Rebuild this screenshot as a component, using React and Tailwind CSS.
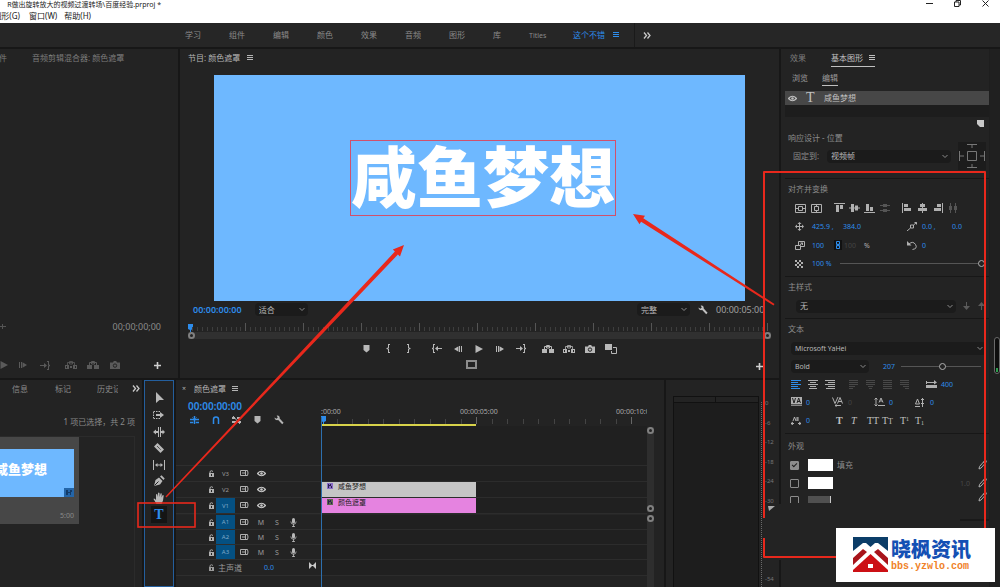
import { useState } from "react";

const workspaces = ["学习", "组件", "编辑", "颜色", "效果", "音频", "图形"];

const videoTracks = [
  { id: "V3", active: false },
  { id: "V2", active: false, clip: { name: "咸鱼梦想", color: "bg-[#c5c5c5]", fx: "bg-[#8a6cc4]" } },
  { id: "V1", active: true, clip: { name: "颜色遮罩", color: "bg-[#e583e0]", fx: "bg-[#5c6a4c]" } },
];
const audioTracks = ["A1", "A2", "A3"];

const dbLabels = ["0", "-6", "-12", "-18", "-24", "-30", "", "", "", "-54"];

// ---------- Icons ----------
function Svg({ w = 12, h = 12, className = "", children }) {
  return (
    <svg
      width={w}
      height={h}
      viewBox={`0 0 ${w} ${h}`}
      fill="currentColor"
      className={`shrink-0 ${className}`}
      aria-hidden="true"
    >
      {children}
    </svg>
  );
}

const MenuIcon = () => (
  <Svg w={6} h={6}>
    <path d="M0 0h6v1H0zM0 2h6v1H0zM0 4h6v1H0z" />
  </Svg>
);

const Chevron = () => (
  <Svg w={6} h={5}>
    <path d="M.5 1l2.500 2.500L5.500 1" fill="none" stroke="currentColor" />
  </Svg>
);

const More = () => (
  <Svg w={8} h={7}>
    <path d="M1 .5l2.500 3L1 6.500M4.500 .5L7 3.500 4.500 6.500" fill="none" stroke="currentColor" strokeWidth="1.300" />
  </Svg>
);

const Plus = () => (
  <Svg w={7} h={7}>
    <path d="M2.700 0h1.600v2.700H7v1.600H4.300V7H2.700V4.300H0V2.700h2.700z" />
  </Svg>
);

const Wrench = () => (
  <Svg w={10} h={10}>
    <path d="M.6 2.400L2.400 3.800 3.800 2.600 2.700.7C4.500.2 6 1.500 5.700 3.400L9.600 7.800 8.200 9.300 4.200 5.100C2.300 5.700.3 4.300.6 2.400z" />
  </Svg>
);

const Eye = () => (
  <Svg w={9} h={7}>
    <path d="M.5 3.500Q4.500-1 8.500 3.500 4.500 8 .5 3.500z" fill="none" stroke="currentColor" strokeWidth="1.200" />
    <circle cx="4.500" cy="3.500" r="1.300" />
  </Svg>
);

const Lock = () => (
  <Svg w={7} h={7}>
    <path d="M1 3h5v4H1z" />
    <path d="M2 3V1.500Q3.500 0 5 1.500" fill="none" stroke="currentColor" />
    <path d="M3 4h1v2H3z" fill="#232323" />
  </Svg>
);

const SyncLock = () => (
  <Svg w={9} h={7}>
    <path d="M.5.5h5v5h-5zM5 .5h2.500q1 2.500 0 5H5M2 3h4" fill="none" stroke="currentColor" />
  </Svg>
);

const Mic = () => (
  <Svg w={7} h={9}>
    <rect x="2" y="0" width="3" height="5.500" rx="1.500" />
    <path d="M.8 3.500Q1 6.300 3.500 6.300T6.200 3.500M3.500 6v3M2 8.500h3" fill="none" stroke="currentColor" strokeWidth=".8" />
  </Svg>
);

const Marker = () => (
  <Svg w={7} h={8}>
    <path d="M.5 0h6v5L3.500 7.500.5 5z" />
  </Svg>
);

const Brace = ({ flip }) => (
  <Svg w={4} h={9} className={flip ? "rotate-180" : ""}>
    <path d="M2 0h2v1H3v3L2 4.500 3 5v3h1v1H2V5.500L.5 5V4L2 3.500z" />
  </Svg>
);

const GoIn = ({ flip }) => (
  <Svg w={10} h={9} className={flip ? "rotate-180" : ""}>
    <path d="M1 0h2v1H2v3l-.5.500L2 5v3h1v1H1V5.500L0 5V4l1-.5z" />
    <path d="M3 4.500L6 2v2h4v1H6v2z" />
  </Svg>
);

const Step = ({ flip }) => (
  <Svg w={8} h={8} className={flip ? "rotate-180" : ""}>
    <path d="M0 1h1v6H0zM2 1h1v6H2zM3.500 1.200L8 4 3.500 6.800z" />
  </Svg>
);

const Play = () => (
  <Svg w={8} h={8}>
    <path d="M.5 0L8 4 .5 8z" />
  </Svg>
);

const Lift = () => (
  <Svg w={12} h={8}>
    <path d="M0 4h5v4H0zM7 4h5v4H7z" />
    <path d="M2.500 4V1.500h7V4M4.500 .5h3v2.500h-3z" fill="none" stroke="currentColor" />
  </Svg>
);

const Extract = () => (
  <Svg w={12} h={8}>
    <path d="M0 4h4v4H0zM8 4h4v4H8zM5 5h2v2H5z" />
    <path d="M2.500 4V1.500h7V4M4.500 .5h3v2.500h-3z" fill="none" stroke="currentColor" strokeWidth=".8" />
    <path d="M1 5h1v2H1zM10 5h1v2h-1z" fill="#232323" />
  </Svg>
);

const Camera = () => (
  <Svg w={10} h={8}>
    <path d="M0 1.500h3L3.800 0h2.400L7 1.500h3V8H0z" />
    <circle cx="5" cy="4.600" r="1.700" fill="none" stroke="#232323" />
  </Svg>
);

const Compare = () => (
  <Svg w={12} h={10}>
    <path d="M0 0h7v6H0z" />
    <path d="M8 3.500h3.500v6h-5V7" fill="none" stroke="currentColor" />
  </Svg>
);

const Pipette = () => (
  <Svg w={9} h={10}>
    <path d="M1 9l.5-2.500 4-4.500 1.500 1.500-4 4.500z" fill="none" stroke="currentColor" />
    <path d="M5 1.800L6.700.3q1-.6 1.700.2t0 1.700L7.500 4z" />
  </Svg>
);

// left / centre / right / justified paragraph marks
const Lines = ({ rows }) => (
  <Svg w={10} h={9}>
    {rows.map(([x, w], i) => (
      <rect key={i} x={x} y={i * 2} width={w} height="1" />
    ))}
  </Svg>
);

const Playhead = () => (
  <Svg w={6} h={8} className="text-[#2d8ceb]">
    <path d="M0 0h5v5l-2 1v2H2V6L0 5z" />
  </Svg>
);

// ---------- Controls ----------
function Select({ label, value, className = "", selectClass = "" }) {
  return (
    <label className={`relative flex h-[13px] items-center rounded-sm bg-[#1b1b1b] ${className}`}>
      <select
        aria-label={label}
        className={`h-full w-full appearance-none bg-transparent pl-1 leading-none text-[#b8b8b8] outline-none ${selectClass}`}
      >
        <option>{value}</option>
      </select>
      <span className="pointer-events-none absolute right-[3px] text-[#8a8a8a]">
        <Chevron />
      </span>
    </label>
  );
}

function Slider({ label, defaultValue, className = "" }) {
  return (
    <input
      type="range"
      aria-label={label}
      defaultValue={defaultValue}
      className={`h-2 min-w-0 appearance-none bg-transparent [&::-webkit-slider-runnable-track]:h-px [&::-webkit-slider-runnable-track]:bg-[#555] [&::-webkit-slider-thumb]:-mt-[3px] [&::-webkit-slider-thumb]:size-[7px] [&::-webkit-slider-thumb]:appearance-none [&::-webkit-slider-thumb]:rounded-full [&::-webkit-slider-thumb]:border [&::-webkit-slider-thumb]:border-[#b0b0b0] [&::-webkit-slider-thumb]:bg-[#232323] ${className}`}
    />
  );
}

function Check({ label, checked }) {
  return (
    <input
      type="checkbox"
      aria-label={label}
      defaultChecked={checked}
      className="relative size-[9px] shrink-0 appearance-none rounded-[1px] border border-[#8c8c8c] checked:bg-[#8c8c8c] checked:after:absolute checked:after:top-0 checked:after:left-[2px] checked:after:h-[5px] checked:after:w-[3px] checked:after:rotate-45 checked:after:border-r checked:after:border-b checked:after:border-[#1e1e1e]"
    />
  );
}

const Ring = () => (
  <span className="block size-[7px] shrink-0 rounded-full border-2 border-[#808080] bg-[#232323]" />
);

const Value = ({ children, className = "" }) => (
  <span className={`text-[7px] text-[#2d8ceb] ${className}`}>{children}</span>
);

function IconButton({ label, className = "", children }) {
  return (
    <button aria-label={label} className={`flex shrink-0 items-center justify-center ${className}`}>
      {children}
    </button>
  );
}

// ---------- Title bar and workspaces ----------
function TitleBar() {
  return (
    <header className="flex h-[23px] justify-between overflow-hidden bg-white text-[8px] text-[#222]">
      <div>
        <div className="flex h-[9px] w-[161px] items-center justify-end text-[7px] whitespace-nowrap">
          R做出旋转放大的视频过渡转场\百度经验.prproj *
        </div>
        <nav className="flex h-[14px] items-center whitespace-nowrap">
          <button className="flex w-5 justify-end">图形(G)</button>
          <button className="ml-[9px]">窗口(W)</button>
          <button className="ml-[7px]">帮助(H)</button>
        </nav>
      </div>
      <div className="flex h-[7px] items-center gap-[21px] pr-[11px]">
        <IconButton label="最小化">
          <Svg w={7} h={7}><path d="M0 3h7v1H0z" /></Svg>
        </IconButton>
        <IconButton label="还原">
          <Svg w={7} h={7}>
            <path d="M.5 2h4.500v4.500H.5zM2 2V.5h4.500V5H5" fill="none" stroke="currentColor" />
          </Svg>
        </IconButton>
        <IconButton label="关闭">
          <Svg w={7} h={7}><path d="M.5.5l6 6M6.500.5l-6 6" fill="none" stroke="currentColor" /></Svg>
        </IconButton>
      </div>
    </header>
  );
}

function WorkspaceBar() {
  return (
    <nav className="flex h-[24px] items-center bg-[#262626] pl-[185px] text-[#8a8a8a]">
      {workspaces.map((name) => (
        <button key={name} className="w-11 text-left">{name}</button>
      ))}
      <button className="w-9 text-left">库</button>
      <button className="w-11 text-left text-[7px]">Titles</button>
      <button className="flex items-center gap-2 text-[#2d8ceb]">
        这个不错 <MenuIcon />
      </button>
      <span className="ml-[15px] h-full border-l border-[#1a1a1a]" />
      <IconButton label="更多" className="ml-2 text-[#c8c8c8]"><More /></IconButton>
    </nav>
  );
}

// ---------- Source monitor ----------
function SourcePanel() {
  return (
    <section className="flex w-[178px] shrink-0 flex-col overflow-hidden bg-[#232323] text-[#7c7c7c]">
      <div className="flex h-[18px] items-center whitespace-nowrap">
        <button className="flex w-[7px] justify-end">件</button>
        <button className="ml-[25px]">音频剪辑混合器: 颜色遮罩</button>
      </div>
      <div className="flex-1" />
      <div className="flex h-[18px] items-center justify-between pr-[17px] text-[#8a8a8a]">
        <Svg w={6} h={7}><path d="M0 3h6v1H0zM2 1h1v5H2z" fill="#555" /></Svg>
        <span className="text-[9px]">00;00;00;00</span>
      </div>
      <div className="mt-[21px] mb-[4px] flex h-[18px] items-center text-[#5a5a5a]">
        <IconButton label="播放" className="w-2"><Play /></IconButton>
        <IconButton label="前进" className="ml-1 w-[22px]"><Step /></IconButton>
        <IconButton label="转到出点" className="w-[22px]"><GoIn flip /></IconButton>
        <IconButton label="插入" className="ml-1 w-[22px]"><Extract /></IconButton>
        <IconButton label="覆盖" className="w-[22px]"><Lift /></IconButton>
        <IconButton label="导出帧" className="w-[22px]"><Camera /></IconButton>
        <IconButton label="按钮编辑器" className="mr-[17px] ml-auto text-[#d0d0d0]"><Plus /></IconButton>
      </div>
    </section>
  );
}

// ---------- Program monitor ----------
function MonitorRuler() {
  return (
    <div className="mr-[8px] ml-[8px]">
      <div className="flex h-[10px] items-end">
        <Playhead />
        <svg className="-ml-[6px] h-[9px] w-full" aria-hidden="true">
          <defs>
            <pattern id="ticks" width="58" height="9" x="-1" patternUnits="userSpaceOnUse">
              <path d="M.5 0v8" stroke="#555" />
              <path
                d="M5.500 4v4M10.500 4v4M15.500 4v4M20.500 4v4M25.500 4v4M30.500 4v4M34.500 4v4M39.500 4v4M44.500 4v4M49.500 4v4M53.500 4v4"
                stroke="#3e3e3e"
              />
            </pattern>
          </defs>
          <rect width="100%" height="9" fill="url(#ticks)" />
        </svg>
      </div>
      <div className="flex h-[7px] items-center justify-between bg-[#303030]">
        <Ring />
        <Ring />
      </div>
    </div>
  );
}

function ProgramPanel() {
  return (
    <section className="flex min-w-0 flex-1 flex-col bg-[#232323]">
      <div className="flex h-[18px] items-center gap-[7px] pl-2 text-[#b4b4b4]">
        <h2>节目: 颜色遮罩</h2>
        <MenuIcon />
      </div>
      <div className="relative mx-[34px] mt-2 min-h-[226px] flex-1 bg-[#6eb8ff]">
        {/* title layer on the video canvas */}
        <div className="absolute top-[65px] left-[136px] flex h-[76px] items-center border border-[#d0506c] pb-1 text-[66px] leading-none font-black whitespace-nowrap text-white">
          咸鱼梦想
        </div>
      </div>
      <div className="flex h-[17px] items-center pl-[13px] whitespace-nowrap">
        <span className="text-[9px] font-semibold text-[#2d8ceb]">00:00:00:00</span>
        <Select label="缩放级别" value="适合" className="ml-[13px] w-[53px]" />
        <Select label="回放分辨率" value="完整" className="ml-auto w-[53px]" />
        <IconButton label="设置" className="ml-2 text-[#c0c0c0]"><Wrench /></IconButton>
        <span className="ml-[8px] w-[63px] text-[9px] text-[#a0a0a0]">00:00:05:00</span>
      </div>
      <div className="pt-1"><MonitorRuler /></div>
      <div className="flex h-[19px] items-center justify-center pl-[18px] text-[#b8b8b8]">
        <IconButton label="添加标记" className="w-[21px]"><Marker /></IconButton>
        <IconButton label="标记入点" className="w-[21px]"><Brace /></IconButton>
        <IconButton label="标记出点" className="w-[21px]"><Brace flip /></IconButton>
        <IconButton label="转到入点" className="ml-[7px] w-[21px]"><GoIn /></IconButton>
        <IconButton label="后退一帧" className="w-[21px]"><Step flip /></IconButton>
        <IconButton label="播放" className="w-[21px]"><Play /></IconButton>
        <IconButton label="前进一帧" className="w-[21px]"><Step /></IconButton>
        <IconButton label="转到出点" className="w-[21px]"><GoIn flip /></IconButton>
        <IconButton label="提升" className="ml-[6px] w-[21px]"><Lift /></IconButton>
        <IconButton label="提取" className="w-[21px]"><Extract /></IconButton>
        <IconButton label="导出帧" className="w-[21px]"><Camera /></IconButton>
        <IconButton label="比较视图" className="w-[21px]"><Compare /></IconButton>
      </div>
      <div className="grid h-[20px] grid-cols-[1fr_auto_1fr] pr-4 text-[#b8b8b8]">
        <span />
        <IconButton label="安全边距" className="h-3 text-[#8c8c8c]">
          <Svg w={11} h={9}><path d="M1 1h9v7H1z" fill="none" stroke="currentColor" strokeWidth="2" /></Svg>
        </IconButton>
        <IconButton label="按钮编辑器" className="h-4 justify-self-end text-[#d0d0d0]"><Plus /></IconButton>
      </div>
    </section>
  );
}

// ---------- Project bin ----------
function ProjectPanel() {
  return (
    <section className="flex w-[142px] shrink-0 flex-col overflow-hidden bg-[#232323] text-[#8a8a8a]">
      <div className="flex h-[17px] items-center pl-3 whitespace-nowrap">
        <button className="w-[43px] text-left">信息</button>
        <button className="w-[42px] text-left">标记</button>
        <button className="w-[21px] overflow-hidden text-left">历史记</button>
        <IconButton label="更多" className="ml-[14px] text-[#c8c8c8]"><More /></IconButton>
      </div>
      <p className="mt-[16px] flex h-[18px] items-center justify-end pr-[7px]">1 项已选择，共 2 项</p>
      <div className="mt-[5px] mr-[7px] flex-1 border-t border-r border-[#2b2b2b]">
        <figure className="h-[87px] w-[79px] bg-[#474747] pt-3">
          <div className="relative flex h-12 w-[74px] items-center justify-end overflow-hidden bg-[#6eb8ff] pr-[27px] pb-2 text-[13px] font-black whitespace-nowrap text-white">
            咸鱼梦想
            <span className="absolute right-0 bottom-0 flex h-[9px] w-[10px] items-center justify-center bg-[#2465a8] text-[#123a68]">
              <Svg w={8} h={7}><path d="M1 6V1h2v5zM3 3h2v1H3zM5 1h2v2H6v3H5z" /></Svg>
            </span>
          </div>
          <figcaption className="mt-[15px] w-[74px] text-right text-[7px] leading-none text-[#8a8a8a]">5:00</figcaption>
        </figure>
      </div>
    </section>
  );
}

// ---------- Toolbar ----------
const tools = [
  {
    name: "选择工具",
    icon: <path d="M3 0l8 8H6.500L3 11z" />,
  },
  {
    name: "向前选择轨道工具",
    icon: (
      <>
        <path d="M.5 2.500h7M.5 9.500h7M.5 3v6" fill="none" stroke="currentColor" strokeDasharray="1.500 1" />
        <path d="M3 5h4V3l4 3-4 3V7H3z" />
      </>
    ),
  },
  {
    name: "波纹编辑工具",
    icon: <path d="M5 1h1v10H5zM7 1h1v10H7zM0 6l3-2.500V5h2v2H3v1.500zM12 6L9.500 3.500V5H8v2h1.500v1.500z" />,
  },
  {
    name: "剃刀工具",
    icon: (
      <>
        <path d="M1 4.500L4.500 1 11 7.500 7.500 11z" />
        <path d="M4 4l4 4" stroke="#232323" strokeDasharray="1 .7" />
      </>
    ),
  },
  {
    name: "外滑工具",
    icon: <path d="M0 1h1v10H0zM11 1h1v10h-1zM2 6l2.500-2v1.500h3V4L10 6 7.500 8V6.500h-3V8z" />,
  },
  {
    name: "钢笔工具",
    icon: (
      <>
        <path d="M1 11l1.500-6L6 2.500 9.500 6 7 9.500zM7 1.500L8.500.3l3.200 3.200L10.500 5z" />
        <path d="M1.500 10.500L5.500 6.500" stroke="#232323" />
      </>
    ),
  },
  {
    name: "手形工具",
    icon: <path d="M3.500 12L.5 7q.5-1 1.500 0l1 1V2.500q.8-1 1.300 0L4.800 5 5 1q.8-1 1.500 0l.2 4L7.500 1.500q.9-.7 1.300.2L8.500 5.500l1-2.200q.9-.6 1.200.4L10 8.500 8.500 12z" />,
  },
];

function ToolBar() {
  const [tool, setTool] = useState("文字工具");
  return (
    <section className="w-[30px] shrink-0 border border-[#245f9e] bg-[#232323] pt-[9px]">
      <div className="grid h-[133px] grid-rows-8 justify-items-center text-[#b8b8b8]">
        {tools.map((t) => (
          <button
            key={t.name}
            aria-label={t.name}
            onClick={() => setTool(t.name)}
            className="flex w-4 items-center justify-center"
          >
            <Svg>{t.icon}</Svg>
          </button>
        ))}
        <button
          aria-label="文字工具"
          onClick={() => setTool("文字工具")}
          className={`flex w-4 items-center justify-center font-['Liberation_Serif',serif] text-[14px] font-bold ${
            tool === "文字工具" ? "bg-[#151515] text-[#2d8ceb]" : ""
          }`}
        >
          T
        </button>
      </div>
    </section>
  );
}

// ---------- Timeline ----------
function TimeRuler() {
  return (
    <div className="flex min-w-0 flex-1 flex-col overflow-hidden pt-[9px]">
      <div className="flex h-[10px] items-center overflow-hidden text-[7px] whitespace-nowrap text-[#a8a8a8]">
        <span className="w-[139px] shrink-0">:00:00</span>
        <span className="w-[156px] shrink-0">00:00:05:00</span>
        <span>00:00:10:00</span>
      </div>
      <div className="flex h-[8px]">
        <Playhead />
        <svg className="-ml-[6px] h-2 w-full" aria-hidden="true">
          {Array.from({ length: 60 }, (_, i) => (
            <path key={i} d={`M${Math.round(i * 15.5)}.5 ${i % 10 ? 3 : 1}V8`} stroke={i % 10 ? "#444" : "#666"} />
          ))}
        </svg>
      </div>
      <div className="h-[2px] w-[155px] bg-[#d8d24a]" />
    </div>
  );
}

function TrackHeader({ id, active, audio }) {
  return (
    <div className="flex w-[145px] shrink-0 items-center border-b border-[#2e2e2e] pl-[30px] text-[6px] text-[#9a9a9a]">
      <IconButton label={`锁定 ${id}`} className="w-[10px] text-[#b0b0b0]"><Lock /></IconButton>
      <button
        className={`flex h-full w-[19px] items-center justify-center ${active ? "bg-[#045082] text-[#7fa9c8]" : ""}`}
      >
        {id}
      </button>
      <IconButton label={`同步锁定 ${id}`} className="w-[18px] text-[#b0b0b0]"><SyncLock /></IconButton>
      {audio ? (
        <>
          <button className="w-4 text-center text-[7px]">M</button>
          <button className="w-4 text-center text-[7px]">S</button>
          <IconButton label={`画外音 ${id}`} className="w-[17px] text-[#b8b8b8]"><Mic /></IconButton>
        </>
      ) : (
        <IconButton label={`显示 ${id}`} className="w-4 text-[#c8c8c8]"><Eye /></IconButton>
      )}
    </div>
  );
}

function Lane({ clip }) {
  return (
    <div className="flex min-w-0 flex-1 border-b border-[#2c2c2c] bg-[#202020]">
      {clip && (
        <div className={`flex h-[15px] w-[155px] items-start pt-px pl-[6px] text-[7px] leading-[8px] text-[#222] ${clip.color}`}>
          <span className={`mr-[5px] flex size-[6px] items-center justify-center text-[#2a2250] ${clip.fx}`}>
            <Svg w={4} h={4}><path d="M0 0h1v4H0zM1 1h1v1H1zM2 0h1v2h1v2H3V2H2z" /></Svg>
          </span>
          {clip.name}
        </div>
      )}
    </div>
  );
}

function Timeline() {
  return (
    <section className="flex min-w-0 flex-1 flex-col bg-[#232323] text-[#b4b4b4]">
      <div className="flex h-[17px] items-center pl-[6px]">
        <button aria-label="关闭序列" className="w-3 text-left text-[7px]">×</button>
        <h2>颜色遮罩</h2>
        <IconButton label="面板菜单" className="ml-[6px]"><MenuIcon /></IconButton>
      </div>
      <div className="relative flex flex-1">
        <div className="flex min-w-0 flex-1 flex-col">
          <div className="flex h-[29px]">
            <div className="w-[145px] shrink-0">
              <div className="flex h-[17px] items-center pl-3 text-[10px] font-semibold text-[#2d8ceb]">00:00:00:00</div>
              <div className="flex h-[11px] items-center pl-[8px]">
                <IconButton label="插入为嵌套" className="w-[21px] text-[#2d8ceb]">
                  <Svg w={9} h={8}>
                    <path d="M0 3h4v1H0zM0 6h3v1H0zM4 0h1v8H4zM5 3h4v1H5zM6 6h3v1H6zM2 1l2 2M7 1L5 3" stroke="currentColor" strokeWidth=".5" />
                  </Svg>
                </IconButton>
                <IconButton label="对齐" className="w-[21px] text-[#2d8ceb]">
                  <Svg w={8} h={8}>
                    <path d="M1.500 8V3.500q0-2.500 2.500-2.500t2.500 2.500V8" fill="none" stroke="currentColor" strokeWidth="1.500" />
                  </Svg>
                </IconButton>
                <IconButton label="链接选择项" className="w-[21px]">
                  <Svg w={9} h={8}>
                    <path d="M0 1h3v2H0zM5 1h4v2H5zM0 5h4v2H0zM6 5h3v2H6z" />
                    <path d="M1 0l7 8" fill="none" stroke="currentColor" />
                  </Svg>
                </IconButton>
                <IconButton label="添加标记" className="w-[21px]"><Marker /></IconButton>
                <IconButton label="时间轴设置" className="w-[21px]"><Wrench /></IconButton>
              </div>
            </div>
            <TimeRuler />
          </div>
          <div className="flex h-10">
            <div className="w-[145px] border-b border-[#2e2e2e]" />
            <div className="flex-1 border-b border-[#2c2c2c] bg-[#202020]" />
          </div>
          {videoTracks.map((t) => (
            <div key={t.id} className="flex h-[16px]">
              <TrackHeader id={t.id} active={t.active} />
              <Lane clip={t.clip} />
            </div>
          ))}
          <div className="h-px bg-[#262626]" />
          {audioTracks.map((id) => (
            <div key={id} className="flex h-[15px]">
              <TrackHeader id={id} active audio />
              <Lane />
            </div>
          ))}
          <div className="flex h-4">
            <div className="flex w-[145px] shrink-0 items-center border-b border-[#2e2e2e] pl-[30px] text-[#9a9a9a]">
              <IconButton label="锁定 主声道" className="w-[10px]"><Lock /></IconButton>
              <span className="ml-[2px]">主声道</span>
              <Value className="ml-[22px]">0.0</Value>
              <Svg w={7} h={7} className="mr-[5px] mb-1 ml-auto text-[#c8c8c8]">
                <path d="M0 0l3 3h1l3-3v7L4 4H3L0 7z" />
              </Svg>
            </div>
            <Lane />
          </div>
          <div className="flex-1" />
        </div>
        <div className="w-[17px] shrink-0 pt-[30px]">
          <div className="flex h-[85px] w-[7px] flex-col justify-between bg-[#2e2e2e]">
            <Ring />
            <Ring />
          </div>
          <div className="mt-[3px] h-[72px] w-[7px] bg-[#2e2e2e]"><Ring /></div>
        </div>
        {/* current time line across the tracks */}
        <div className="absolute top-[20px] bottom-0 left-[145px] w-px bg-[#2d6fae]" />
      </div>
    </section>
  );
}

// ---------- Audio meters ----------
function Meters() {
  return (
    <section className="flex w-[113px] shrink-0 bg-[#232323] pt-4 pl-[7px]">
      <div className="flex w-[86px] flex-col border border-b-0 border-[#111] bg-[#1d1d1d]">
        <div className="flex h-[6px] border-b border-[#111] bg-[#232323]">
          <div className="w-1/2 border-r border-[#111]" />
        </div>
      </div>
      <div className="mt-[6px] w-[3px] border-r border-dotted border-[#6a6a6a]" />
      <div className="flex-1 overflow-hidden pl-[3px] text-[6px] text-[#777]">
        <div className="grid h-[195px] grid-rows-10 leading-none">
          {dbLabels.map((db, i) => (
            <span key={i} className="pt-1">{db}</span>
          ))}
        </div>
      </div>
    </section>
  );
}

// ---------- Essential graphics ----------
const Title = ({ children }) => <h3 className="flex h-5 items-center pl-[3px] text-[#8c8c8c]">{children}</h3>;

function Transform() {
  return (
    <div className="text-[#b0b0b0]">
      <div className="flex h-[18px] items-center pl-[10px]">
        <IconButton label="水平居中" className="w-4 justify-start">
          <Svg w={11} h={9}><path d="M.5.5h10v8H.5zM0 4.500h3M8 4.500h3M3.500 2.500h4v4h-4z" fill="none" stroke="currentColor" /></Svg>
        </IconButton>
        <IconButton label="垂直居中" className="w-[23px] justify-start">
          <Svg w={11} h={9}><path d="M.5.5h10v8H.5zM5.500 0v2M5.500 7v2M3.500 2.500h4v4h-4z" fill="none" stroke="currentColor" /></Svg>
        </IconButton>
        <IconButton label="顶对齐" className="w-[15px] justify-start">
          <Svg w={11} h={10}><path d="M0 0h11v1H0zM2 2h3v7H2zM6 2h3v4H6z" /></Svg>
        </IconButton>
        <IconButton label="垂直对齐" className="w-[15px] justify-start">
          <Svg w={11} h={10}><path d="M0 4.500h11v1H0zM2 1h3v8H2zM6 2.500h3v5H6z" /></Svg>
        </IconButton>
        <IconButton label="底对齐" className="w-4 justify-start">
          <Svg w={11} h={10}><path d="M0 9h11v1H0zM2 1h3v7H2zM6 4h3v4H6z" /></Svg>
        </IconButton>
        <IconButton label="垂直分布" className="w-[22px] justify-start text-[#555]">
          <Svg w={10} h={10}><path d="M0 2h10v1H0zM0 7h10v1H0zM3 1h4v3H3zM3 6h4v3H3z" /></Svg>
        </IconButton>
        <IconButton label="左对齐" className="w-4 justify-start">
          <Svg w={10} h={10}><path d="M0 0h1v10H0zM2 1h4v3H2zM2 5h7v3H2z" /></Svg>
        </IconButton>
        <IconButton label="水平对齐" className="w-[15px] justify-start">
          <Svg w={9} h={10}><path d="M4 0h1v10H4zM2 1h5v3H2zM0 5h9v3H0z" /></Svg>
        </IconButton>
        <IconButton label="右对齐" className="w-[15px] justify-start">
          <Svg w={10} h={10}><path d="M9 0h1v10H9zM4 1h4v3H4zM1 5h7v3H1z" /></Svg>
        </IconButton>
        <IconButton label="水平分布" className="text-[#555]">
          <Svg w={10} h={10}><path d="M2 0h1v10H2zM7 0h1v10H7zM1 3h3v4H1zM6 3h3v4H6z" /></Svg>
        </IconButton>
      </div>
      <div className="grid h-[19px] grid-cols-[17px_31px_64px_15px_30px_1fr] items-center pl-[10px]">
        <Svg w={9} h={9}>
          <path d="M4.500 0l2 2H5v2h2V2.500l2 2-2 2V5H5v2h1.500l-2 2-2-2H4V5H2v1.500l-2-2 2-2V4h2V2H2.500z" />
        </Svg>
        <Value>425.9 ,</Value>
        <Value>384.0</Value>
        <Svg w={10} h={9}>
          <path d="M3.500 3h3v3h-3zM0 9l3.500-3M6.500 3L9.500.5M7.500.5h2v2" fill="none" stroke="currentColor" />
        </Svg>
        <Value>0.0 ,</Value>
        <Value>0.0</Value>
      </div>
      <div className="grid h-[18px] grid-cols-[17px_95px_15px_1fr] items-center pl-[10px]">
        <Svg w={10} h={9}>
          <path d="M.5 4.500h5v4h-5zM3.500 4V.5h6v5H6M5 4l2.500-2M5.500 2h2v2" fill="none" stroke="currentColor" />
        </Svg>
        <div className="flex items-center">
          <Value className="w-[22px]">100</Value>
          <button aria-label="设置缩放锁定" className="flex h-[10px] w-2 items-center justify-center bg-[#111] text-[#2d8ceb]">
            <Svg w={4} h={8}>
              <path d="M.5.5h3v3h-3zM.5 4.500h3v3h-3zM2 2.500v3" fill="none" stroke="currentColor" />
            </Svg>
          </button>
          <span className="ml-[2px] text-[7px] text-[#444]">100</span>
          <span className="ml-[8px] text-[7px]">%</span>
        </div>
        <Svg w={10} h={9}>
          <path d="M2 3Q6-.5 8.500 3.500T5.500 8.500" fill="none" stroke="currentColor" />
          <path d="M0 0v4.500h4.500z" />
        </Svg>
        <Value>0</Value>
      </div>
      <div className="flex h-[19px] items-center pl-[10px]">
        <Svg w={8} h={8}>
          {Array.from({ length: 4 }, (_, y) => (
            <path key={y} d={y % 2 ? `M2 ${y * 2}h2v2H2zM6 ${y * 2}h2v2H6z` : `M0 ${y * 2}h2v2H0zM4 ${y * 2}h2v2H4z`} />
          ))}
        </Svg>
        <Value className="ml-[9px] w-[28px]">100 %</Value>
        <Slider label="不透明度" defaultValue={100} className="mr-1 flex-1" />
      </div>
    </div>
  );
}

const alignIcons = [
  { name: "左对齐文本", rows: [[0, 10], [0, 7], [0, 10], [0, 7], [0, 9]] },
  { name: "居中对齐文本", rows: [[0, 10], [2, 6], [0, 10], [2, 6], [1, 8]] },
  { name: "右对齐文本", rows: [[0, 10], [3, 7], [0, 10], [3, 7], [1, 9]] },
];
const justifyIcons = [
  { name: "最后一行左对齐", rows: [[0, 9], [0, 9], [0, 9], [0, 6], [0, 4]] },
  { name: "最后一行居中对齐", rows: [[0, 9], [0, 9], [0, 9], [2, 5], [3, 3]] },
  { name: "最后一行对齐", rows: [[0, 9], [0, 9], [0, 9], [0, 9], [0, 9]] },
  { name: "最后一行右对齐", rows: [[0, 9], [0, 9], [0, 9], [3, 6], [5, 4]] },
];

function TextSection() {
  return (
    <div className="pl-[6px] text-[#b0b0b0]">
      <div className="flex h-[18px] items-center pr-[3px]">
        <Select label="字体" value="Microsoft YaHei" className="flex-1" selectClass="text-[7px]" />
      </div>
      <div className="flex h-[18px] items-center pr-2">
        <Select label="字体样式" value="Bold" className="w-[78px]" selectClass="text-[7px]" />
        <Value className="mr-[6px] ml-[14px]">207</Value>
        <Slider label="字体大小" defaultValue={52} className="flex-1" />
      </div>
      <div className="flex h-[18px] items-center">
        {alignIcons.map((a, i) => (
          <IconButton key={a.name} label={a.name} className={i === 0 ? "w-[17px] justify-start text-[#2d8ceb]" : "w-[17px] justify-start"}>
            <Lines rows={a.rows} />
          </IconButton>
        ))}
        <span className="w-[7px]" />
        {justifyIcons.map((a) => (
          <IconButton key={a.name} label={a.name} className="w-[17px] justify-start text-[#484848]">
            <Lines rows={a.rows} />
          </IconButton>
        ))}
        <Svg w={11} h={9} className="ml-[9px]">
          <path d="M0 5h11v3H0zM1 2h8v1H1zM8 0l3 2.500L8 4.500zM0 1h1v3H0z" />
        </Svg>
        <Value className="ml-1">400</Value>
      </div>
      <div className="grid h-[18px] grid-cols-[41px_42px_41px_1fr] items-center">
        <div className="flex items-center gap-1">
          <Svg w={11} h={10}>
            <path d="M0 0h11v7H0zM0 8.500h11" stroke="currentColor" strokeWidth=".7" />
            <path d="M1.500 1l1.500 5 1.500-5M6 6l1.700-5L9.500 6M6.500 4.500H9" fill="none" stroke="#232323" />
          </Svg>
          <Value>0</Value>
        </div>
        <div className="flex items-center gap-[5px]">
          <Svg w={11} h={10}>
            <path d="M.5.5L3 6.500 6 0M5.500 6.500L8 .5l2.500 6M6 4.500h4M3 8.500h6M4.500 7.500l-1.500 1 1.500 1" fill="none" stroke="currentColor" />
          </Svg>
          <span className="text-[7px] text-[#444]">0</span>
        </div>
        <div className="flex items-center gap-1">
          <Svg w={11} h={10}>
            <path d="M2 1v8M.5 2.500L2 1l1.500 1.500M.5 7.500L2 9l1.500-1.500M5 5.500l2-4.500 2 4.500M6 4h2M4 8.500h7" fill="none" stroke="currentColor" />
          </Svg>
          <Value>0</Value>
        </div>
        <div className="flex items-center gap-[5px]">
          <Svg w={10} h={9}>
            <path d="M.5 6L2.500 1 4.500 6zM0 8.500h5M7.500 0v9M6 2L7.500.5 9 2M6 5.500h3" fill="none" stroke="currentColor" />
          </Svg>
          <Value>0</Value>
        </div>
      </div>
      <div className="flex h-[19px] items-center font-['Liberation_Serif',serif] text-[10px] text-[#c0c0c0]">
        <Svg w={10} h={9} className="mr-[5px]">
          <path d="M2 5l1.500-4L5 5M6 1v4M7 1v4M0 7.500h3M7 7.500h3M2 6l-2 1.500L2 9M8 6l2 1.500L8 9" fill="none" stroke="currentColor" strokeWidth=".9" />
        </Svg>
        <Value className="w-[30px] font-['Noto_Sans',sans-serif]">0</Value>
        <button className="w-[15px] text-left font-bold">T</button>
        <button className="w-[16px] text-left italic">T</button>
        <button className="w-[15px] text-left">TT</button>
        <button className="w-[18px] text-left">T<span className="text-[8px]">T</span></button>
        <button className="w-[15px] text-left">T<sup className="text-[6px]">1</sup></button>
        <button className="text-left">T<sub className="text-[6px]">1</sub></button>
      </div>
    </div>
  );
}

function Appearance() {
  return (
    <div className="pr-[2px] pl-[5px] text-[#b0b0b0]">
      <div className="flex h-[18px] items-center">
        <Check label="启用填充" checked />
        <button aria-label="填充颜色" className="ml-[9px] h-3 w-[25px] bg-white" />
        <span className="ml-1 text-[#8c8c8c]">填充</span>
        <IconButton label="吸取填充颜色" className="ml-auto"><Pipette /></IconButton>
      </div>
      <div className="flex h-[18px] items-center">
        <Check label="启用描边" />
        <button aria-label="描边颜色" className="ml-[9px] h-3 w-[25px] bg-white" />
        <span className="mr-2 ml-auto text-[7px] text-[#484848]">1.0</span>
        <IconButton label="吸取描边颜色"><Pipette /></IconButton>
      </div>
      <div className="flex h-[11px] items-start overflow-hidden pt-1">
        <Check label="启用阴影" />
        <button aria-label="阴影颜色" className="ml-[9px] h-2 w-[23px] border-r border-[#c8c8c8] bg-[#505050]" />
        <IconButton label="吸取阴影颜色" className="-mt-1 ml-auto"><Pipette /></IconButton>
      </div>
    </div>
  );
}

function GraphicsPanel() {
  const [tab, setTab] = useState("编辑");
  return (
    <aside className="flex w-[219px] shrink-0 bg-[#232323]">
      <div className="min-w-0 flex-1 pl-1">
        <div className="flex h-[18px] items-center pl-[5px] text-[#7c7c7c]">
          <button className="w-[41px] text-left">效果</button>
          <button className="flex h-[17px] items-center gap-[6px] border-b border-[#c0c0c0] text-[#c0c0c0]">
            基本图形 <MenuIcon />
          </button>
        </div>
        <div className="mb-[2px] flex h-[22px] items-center gap-[14px] pl-[7px] text-[#9c9c9c]">
          {["浏览", "编辑"].map((name) => (
            <button
              key={name}
              onClick={() => setTab(name)}
              className={`flex h-[15px] items-center border-b ${tab === name ? "border-[#c0c0c0]" : "border-transparent"}`}
            >
              {name}
            </button>
          ))}
        </div>
        <div className="flex h-[14px] items-center bg-[#474747] pl-[3px] text-[#c0c0c0]">
          <Eye />
          <span className="ml-[9px] w-[18px] font-['Liberation_Serif',serif] text-[14px]">T</span>
          咸鱼梦想
        </div>
        <div className="h-3 bg-[#1d1d1d]" />
        <div className="flex h-3 items-center justify-end pr-[5px] text-[#c8c8c8]">
          <IconButton label="新建图层">
            <Svg w={7} h={7}><path d="M0 0h7v7H3L0 4z" /></Svg>
          </IconButton>
        </div>
        <h3 className="flex h-[18px] items-center pl-[3px] text-[#8c8c8c]">响应设计 - 位置</h3>
        <div className="flex h-[18px] items-center pl-2 text-[#8c8c8c]">
          <span className="w-[34px]">固定到:</span>
          <Select label="固定到" value="视频帧" className="flex-1" />
          <div className="-my-[5px] mr-[3px] ml-[7px] bg-[#1c1c1c] text-[#777]">
            <Svg w={28} h={28}>
              <path
                d="M9.500 9.500h9v9h-9zM9 2.500h10M14 3v3M9 25.500h10M14 22v3M1.500 9v10M2 14h4M26.500 9v10M22 14h4"
                fill="none"
                stroke="currentColor"
              />
            </Svg>
          </div>
        </div>
        <hr className="mt-[13px] border-[#171717]" />

        <Title>对齐并变换</Title>
        <Transform />
        <hr className="mt-[3px] border-[#171717]" />

        <Title>主样式</Title>
        <div className="flex h-[18px] items-center pr-1 pl-[11px] text-[#5a5a5a]">
          <Select label="主样式" value="无" className="flex-1" />
          <IconButton label="从主样式同步" className="ml-[7px]">
            <Svg w={7} h={8}><path d="M3 0h1v4h3L3.500 8 0 4h3z" /></Svg>
          </IconButton>
          <IconButton label="推送为主样式" className="ml-[8px]">
            <Svg w={7} h={8}><path d="M3 8h1V4h3L3.500 0 0 4h3z" /></Svg>
          </IconButton>
        </div>
        <hr className="mt-[3px] border-[#171717]" />

        <Title>文本</Title>
        <TextSection />
        <hr className="mt-[3px] border-[#171717]" />

        <div className="pt-[2px]"><Title>外观</Title></div>
        <Appearance />
      </div>
      <div className="flex w-[11px] items-start justify-end border-l border-[#1e1e1e] bg-[#202020] pt-[288px]">
        <div className="flex h-[37px] w-[6px] items-end justify-center rounded-sm border border-[#6a6a6a] bg-[#0e0e0e] p-px">
          <span className="h-1 w-full bg-[#2f9e4f]" />
        </div>
      </div>
    </aside>
  );
}

// ---------- Red callouts ----------
function Callouts() {
  return (
    <svg
      width="1000"
      height="587"
      viewBox="0 0 1000 587"
      className="pointer-events-none absolute top-0 left-0 text-[#e8281c]"
      fill="currentColor"
      aria-hidden="true"
    >
      <rect x="763" y="504" width="222" height="56" fill="#232323" />
      <path d="M768 506h7l-6 5z" fill="#aaa" />
      <path d="M960 520h29" stroke="#111" />
      <g fill="none" stroke="currentColor" strokeWidth="2">
        <path d="M764 518V172h221v385M764 538v19h72" strokeLinejoin="round" />
        <rect x="138" y="503" width="57" height="24" strokeWidth="1.600" />
      </g>
      <path d="M165.500 496.500L394.900 251.600 392.800 249.600 404 245 400 256.400 397.900 254.400 166.500 497.500z" />
      <path d="M774.500 304L643.300 218.300 645 215.800 633 214 639.500 224.200 641.100 221.700 773.500 305.500z" />
    </svg>
  );
}

function SiteLogo() {
  return (
    <a
      href="#home"
      className="absolute right-[5px] bottom-[5px] flex h-[54px] w-[159px] items-center gap-[3px] bg-white pl-[17px]"
    >
      <svg width="35" height="36" viewBox="0 0 35 36" aria-hidden="true">
        <path d="M0 0h35v14L25 6h-3l-4.500 4L13 6h-3L0 14z" fill="#0b3d68" />
        <path d="M0 21l10-9 4 3L0 28zM35 21l-10-9-4 3 14 13z" fill="#a8141b" />
        <path d="M17.500 17L0 33v2h35v-2z" fill="#cc1015" />
        <path d="M15 27h5v4h-5z" fill="#fff" />
      </svg>
      <span className="flex flex-col">
        <span className="text-[20px] leading-[22px] font-black text-[#1450b4]">晓枫资讯</span>
        <span className="font-['Liberation_Mono',monospace] text-[10px] leading-[11px] font-bold text-[#f08228]">
          bbs.yzwlo.com
        </span>
      </span>
    </a>
  );
}

export default function App() {
  return (
    <div className="relative flex min-h-screen flex-col overflow-hidden bg-[#171717] font-['Noto_Sans','Noto_Sans_CJK_SC',sans-serif] text-[8px] leading-none">
      <TitleBar />
      <WorkspaceBar />
      <main className="flex flex-1 gap-[2px] pt-[2px]">
        <div className="flex min-w-0 flex-1 flex-col gap-[2px]">
          <div className="flex flex-1 gap-[2px]">
            <SourcePanel />
            <ProgramPanel />
          </div>
          <div className="flex h-[207px] gap-[2px]">
            <ProjectPanel />
            <ToolBar />
            <Timeline />
            <Meters />
          </div>
        </div>
        <GraphicsPanel />
      </main>
      <Callouts />
      <SiteLogo />
    </div>
  );
}
